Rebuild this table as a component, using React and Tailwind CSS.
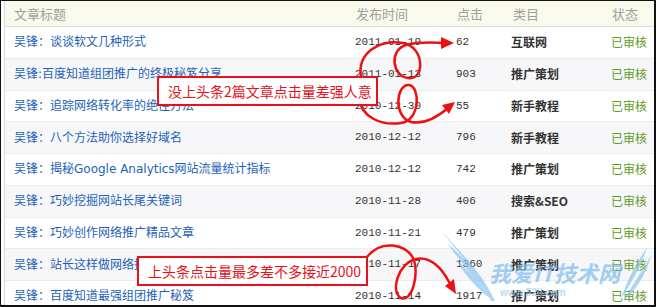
import React from "react";

const rows = [
  ["吴锋：谈谈软文几种形式", "2011-01-19", "62", "互联网"],
  ["吴锋:百度知道组团推广的终极秘笈分享", "2011-01-13", "903", "推广策划"],
  ["吴锋：追踪网络转化率的绝佳方法", "2010-12-30", "55", "新手教程"],
  ["吴锋：八个方法助你选择好域名", "2010-12-12", "796", "新手教程"],
  ["吴锋：揭秘Google Analytics网站流量统计指标", "2010-12-12", "742", "推广策划"],
  ["吴锋：巧妙挖掘网站长尾关键词", "2010-11-28", "406", "搜索&SEO"],
  ["吴锋：巧妙创作网络推广精品文章", "2010-11-21", "479", "推广策划"],
  ["吴锋：站长这样做网络推广", "2010-11-17", "1360", "推广策划"],
  ["吴锋：百度知道最强组团推广秘笈", "2010-11-14", "1917", "推广策划"],
];

const cjk = { fontFamily: '"Noto Sans CJK SC", "Noto Sans", sans-serif' };
const title = { fontFamily: '"DejaVu Sans", "Noto Sans CJK SC", sans-serif' };
const mono = { fontFamily: '"Liberation Mono", "DejaVu Sans Mono", monospace' };

function Arrows() {
  return (
    <svg className="absolute left-0 top-0 pointer-events-none" width="656" height="307" viewBox="0 0 656 307">
      <g fill="none" stroke="#ee1111" strokeWidth="2.5" strokeLinecap="round">
        <path d="M360 76 C356 52 378 38 402 42 C424 46 424 80 407 77 C391 75 388 49 405 44 C420 40 434 42 446 42" />
        <path d="M358 97 C360 116 380 125 400 122 C420 119 419 85 408 84 C395 83 392 116 410 121 C426 124 440 113 447 107" />
        <path d="M366 256 C380 238 405 243 412 257 C419 271 411 302 400 297 C389 291 397 262 415 258 C431 255 441 268 448 281" />
      </g>
      <g fill="#ee1111">
        <polygon points="440,36 453,42 440,48" />
        <polygon points="454,101 448,113 441,104" />
        <polygon points="455,293 444,285 453,278" />
      </g>
    </svg>
  );
}

function Watermark() {
  return (
    <div className="absolute left-[436px] top-[228px] w-[220px] h-[79px] pointer-events-none">
      <svg className="absolute left-0 top-0" width="220" height="79" viewBox="0 0 220 79">
        <g fill="#8cc4ee" opacity="0.7">
          <path d="M4 2 C20 18 38 40 56 70 C44 48 26 24 4 2 Z" />
          <path d="M4 2 C24 24 44 42 58 72 L54 72 C42 46 24 26 4 2 Z" />
          <path d="M10 14 C26 28 44 46 56 70 C40 52 26 36 10 14 Z" />
          <path d="M18 30 C30 40 44 54 54 70 C40 60 30 48 18 30 Z" />
          <path d="M210 18 C200 34 190 50 184 70 C194 54 204 38 210 18 Z" />
          <path d="M214 26 C206 42 196 58 186 72 C200 60 210 44 214 26 Z" />
          <path d="M206 40 C198 52 192 62 186 72 C196 64 204 54 206 40 Z" />
        </g>
      </svg>
      <div
        className="absolute left-[52px] top-[30px] text-[22px] leading-[26px] font-bold italic text-[#7cbcee] opacity-70 whitespace-nowrap"
        style={cjk}
      >
        我爱IT技术网
      </div>
      <div
        className="absolute left-[63px] top-[58px] text-[10px] leading-[12px] font-bold text-[#8cc4ee] opacity-60"
        style={{ fontFamily: '"Liberation Sans", Arial, sans-serif' }}
      >
        www.52ij.com
      </div>
    </div>
  );
}

export default function App() {
  return (
    <div className="relative w-[656px] h-[307px] overflow-hidden bg-white border-l border-t border-r-2 border-b-2 border-[#111]">
      <div className="ml-[3px] h-full border-l border-[#d9d9d9] flex flex-col">
        <div
          className="grid grid-cols-[350px_101px_55px_100px_1fr] h-[26px] shrink-0 items-center bg-[#f9f9ec] border-b border-[#dcdcdc] text-[13px] text-[#a0a0a0]"
          style={cjk}
        >
          <div className="pl-[9px]">文章标题</div>
          <div className="pl-px">发布时间</div>
          <div className="pl-px">点击</div>
          <div className="pl-[2px]">类目</div>
          <div className="pl-px">状态</div>
        </div>
        {rows.map((r, i) => (
          <div
            key={i}
            className={`grid grid-cols-[350px_101px_55px_100px_1fr] h-[31.75px] shrink-0 items-center border-b border-[#ececec] ${
              i % 2 === 1 ? "bg-[#f7f7f9]" : "bg-white"
            }`}
          >
            <div className="pl-[9px] text-[12px] text-[#1e62b8] whitespace-nowrap" style={title}>
              {r[0]}
            </div>
            <div className="text-[11px] text-[#333]" style={mono}>
              {r[1]}
            </div>
            <div className="text-[11px] text-[#333]" style={mono}>
              {r[2]}
            </div>
            <div className="text-[12px] font-bold text-[#333]" style={cjk}>
              {r[3]}
            </div>
            <div className="text-[12px] text-[#5e9a25]" style={cjk}>
              已审核
            </div>
          </div>
        ))}
      </div>

      <Arrows />

      <div
        className="absolute left-[156px] top-[75px] w-[221px] h-[30px] border-2 border-[#e8101a] bg-white flex items-center pl-[9px] text-[14px] text-[#e8101a] whitespace-nowrap"
        style={cjk}
      >
        没上头条2篇文章点击量差强人意
      </div>
      <div
        className="absolute left-[136px] top-[255px] w-[231px] h-[30px] border-2 border-[#e8101a] bg-white flex items-center pl-[9px] text-[14px] text-[#e8101a] whitespace-nowrap"
        style={cjk}
      >
        上头条点击量最多差不多接近2000
      </div>

      <Watermark />
    </div>
  );
}
